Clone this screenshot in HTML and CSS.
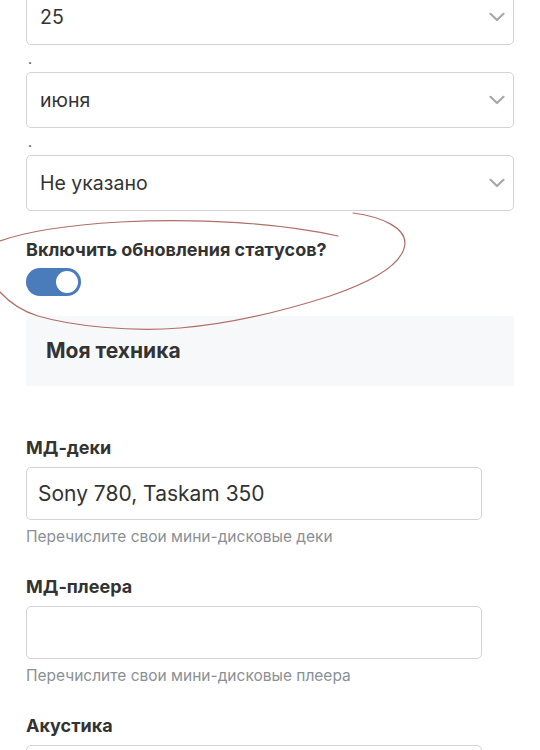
FILE: index.html
```html
<!DOCTYPE html>
<html lang="ru">
<head>
<meta charset="utf-8">
<title>Профиль</title>
<link rel="stylesheet" href="styles.css">
</head>
<body>
<div class="form">
  <div class="select">
    <span class="select-value">25</span>
    <svg class="chevron" width="16" height="10" viewBox="0 0 16 10"><path d="M1.5 1.8 L8 8 L14.5 1.8" fill="none" stroke="#a8a8a8" stroke-width="2.2" stroke-linecap="round" stroke-linejoin="round"/></svg>
  </div>
  <div class="sep">.</div>
  <div class="select">
    <span class="select-value">июня</span>
    <svg class="chevron" width="16" height="10" viewBox="0 0 16 10"><path d="M1.5 1.8 L8 8 L14.5 1.8" fill="none" stroke="#a8a8a8" stroke-width="2.2" stroke-linecap="round" stroke-linejoin="round"/></svg>
  </div>
  <div class="sep">.</div>
  <div class="select">
    <span class="select-value">Не указано</span>
    <svg class="chevron" width="16" height="10" viewBox="0 0 16 10"><path d="M1.5 1.8 L8 8 L14.5 1.8" fill="none" stroke="#a8a8a8" stroke-width="2.2" stroke-linecap="round" stroke-linejoin="round"/></svg>
  </div>

  <div class="toggle-group">
    <div class="label">Включить обновления статусов?</div>
    <div class="toggle"><span class="knob"></span></div>
  </div>

  <div class="panel">Моя техника</div>

  <div class="field first">
    <div class="label">МД-деки</div>
    <div class="input">Sony 780, Taskam 350</div>
    <div class="help">Перечислите свои мини-дисковые деки</div>
  </div>
  <div class="field">
    <div class="label">МД-плеера</div>
    <div class="input"></div>
    <div class="help">Перечислите свои мини-дисковые плеера</div>
  </div>
  <div class="field">
    <div class="label">Акустика</div>
    <div class="input"></div>
  </div>
</div>

<svg class="scribble" width="540" height="750" viewBox="0 0 540 750">
  <path d="M0 241 C25 232 70 225 120 222 C200 218 280 223 338 236" fill="none" stroke="#b06e6a" stroke-width="1.2" stroke-linecap="round"/>
  <path d="M353 213 C383 217 405 228 405 243 C404 262 380 279 330 296 C280 312 230 324 180 328 C130 332 72 326 38 316 C22 311 9 302 0 292" fill="none" stroke="#b06e6a" stroke-width="1.2" stroke-linecap="round"/>
</svg>
</body>
</html>
```

FILE: styles.css
```css
html, body {
  margin: 0;
  padding: 0;
  background: #ffffff;
}

body {
  font-family: "Inter", "Liberation Sans", sans-serif;
  color: #333333;
  width: 540px;
  height: 750px;
  overflow: hidden;
}

.form {
  margin-top: -11px;
  padding: 0 26px;
  display: flow-root;
}

.select {
  height: 56px;
  box-sizing: border-box;
  border: 1px solid #d3d3d3;
  border-radius: 5px;
  display: flex;
  align-items: center;
  justify-content: space-between;
  padding: 0 8px 0 13px;
  font-size: 19.5px;
  color: #333333;
}

.chevron {
  display: block;
}

.sep {
  height: 27px;
  line-height: 27px;
  font-size: 14px;
  padding-left: 2px;
  color: #333333;
}

.toggle-group {
  margin-top: 27px;
}

.label {
  font-size: 18px;
  font-weight: 700;
  line-height: 24px;
  color: #333333;
}

.toggle {
  margin-top: 6px;
  width: 55px;
  height: 28px;
  border-radius: 14px;
  background: #4a7bbb;
  display: flex;
  align-items: center;
  justify-content: flex-end;
  padding-right: 3px;
  box-sizing: border-box;
}

.knob {
  width: 22px;
  height: 22px;
  border-radius: 50%;
  background: #ffffff;
}

.panel {
  margin-top: 20px;
  background: #f7f8fa;
  padding: 21px 20px;
  font-size: 21px;
  font-weight: 700;
  line-height: 28px;
  color: #333333;
}

.field {
  margin-top: 28px;
}

.field.first {
  margin-top: 50px;
}

.input {
  margin-top: 7px;
  width: 456px;
  height: 53px;
  box-sizing: border-box;
  border: 1px solid #d3d3d3;
  border-radius: 5px;
  display: flex;
  align-items: center;
  padding: 0 11px;
  font-size: 21px;
  color: #333333;
}

.help {
  margin-top: 7px;
  font-size: 15.5px;
  line-height: 20px;
  color: #8a9096;
}

.scribble {
  position: absolute;
  top: 0;
  left: 0;
  pointer-events: none;
}
```
